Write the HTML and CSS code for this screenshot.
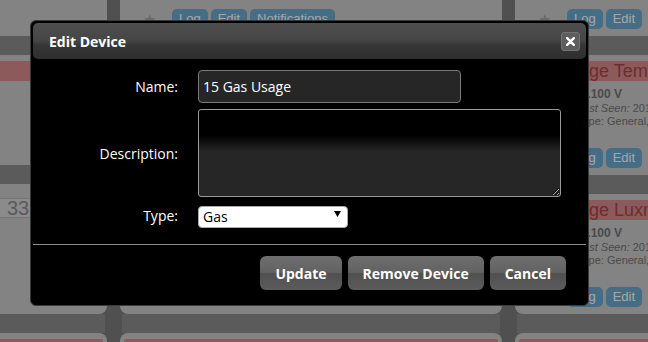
FILE: index.html
```html
<!DOCTYPE html>
<html lang="en">
<head>
  <meta charset="UTF-8" />
  <meta name="viewport" content="width=device-width, initial-scale=1.0" />
  <title>Dashboard - Edit Device</title>
  <link rel="stylesheet" href="styles.css">
</head>
<body>
  <div class="dashboard">
    <div class="column">
      <div class="item">
        <div class="item-options">
          <span class="star">★</span>
          <span class="btn-small">Log</span>
          <span class="btn-small">Edit</span>
        </div>
      </div>
      <div class="item item-short">
        <div class="item-name">Kitchen Setpoint</div>
      </div>
      <div class="item item-tall">
        <div class="item-value">334.50</div>
      </div>
      <div class="item">
        <div class="item-name">Outside Temp</div>
      </div>
    </div>

    <div class="column">
      <div class="item">
        <div class="item-options">
          <span class="star">★</span>
          <span class="btn-small">Log</span>
          <span class="btn-small">Edit</span>
          <span class="btn-small">Notifications</span>
        </div>
      </div>
      <div class="item"></div>
      <div class="item"></div>
      <div class="item">
        <div class="item-name">Gas Meter</div>
      </div>
    </div>

    <div class="column">
      <div class="item">
        <div class="item-options">
          <span class="star">★</span>
          <span class="btn-small">Log</span>
          <span class="btn-small">Edit</span>
        </div>
      </div>
      <div class="item">
        <div class="item-name">Garage Temperature</div>
        <div class="item-data">
          <div class="item-big">10.100 V</div>
          <div><i>Last Seen:</i> 2015-03-14 10:22:51</div>
          <div>Type: General, Voltage</div>
        </div>
        <div class="item-options">
          <span class="star">★</span>
          <span class="btn-small">Log</span>
          <span class="btn-small">Edit</span>
        </div>
      </div>
      <div class="item">
        <div class="item-name">Garage Luxmeter</div>
        <div class="item-data">
          <div class="item-big">10.100 V</div>
          <div><i>Last Seen:</i> 2015-03-14 10:22:51</div>
          <div>Type: General, Voltage</div>
        </div>
        <div class="item-options">
          <span class="star">★</span>
          <span class="btn-small">Log</span>
          <span class="btn-small">Edit</span>
        </div>
      </div>
      <div class="item">
        <div class="item-name">Garage Humidity</div>
      </div>
    </div>
  </div>

  <div class="overlay"></div>

  <div class="dialog">
    <div class="dialog-title">
      <span>Edit Device</span>
      <button class="dialog-close" type="button">
        <svg width="9" height="9" viewBox="0 0 9 9">
          <path d="M1.2 1.2 L7.8 7.8 M7.8 1.2 L1.2 7.8" stroke="#fff" stroke-width="2.4" stroke-linecap="round" fill="none"/>
        </svg>
      </button>
    </div>

    <form class="dialog-form">
      <label for="devname">Name:</label>
      <input id="devname" class="field-name" type="text" value="15 Gas Usage">

      <label for="devdesc">Description:</label>
      <textarea id="devdesc" class="field-desc"></textarea>

      <label for="devtype">Type:</label>
      <div class="select-wrap">
        <select id="devtype">
          <option>Gas</option>
        </select>
        <svg class="select-arrow" width="7" height="6" viewBox="0 0 7 6">
          <path d="M0 0 L7 0 L3.5 6 Z" fill="#000"/>
        </svg>
      </div>
    </form>

    <div class="dialog-buttons">
      <button type="button">Update</button>
      <button type="button">Remove Device</button>
      <button type="button">Cancel</button>
    </div>
  </div>
</body>
</html>
```

FILE: styles.css
```css
* {
  box-sizing: border-box;
}

body {
  margin: 0;
  height: 342px;
  overflow: hidden;
  background: #7b7b7b;
  font-family: 'Liberation Sans', Arial, sans-serif;
  position: relative;
}

/* dashboard behind the dialog */

.dashboard {
  display: flex;
  gap: 13px;
  margin-left: -275px;
  margin-top: -84px;
}

.column {
  flex: none;
  width: 382px;
  display: flex;
  flex-direction: column;
}

.item {
  position: relative;
  height: 120px;
  margin-bottom: 19px;
  padding: 6px 4px 7px;
  background: #c9c9c9;
  border-radius: 8px;
  display: flex;
  flex-direction: column;
}

.item::after {
  content: '';
  position: absolute;
  left: 2px;
  right: 2px;
  top: 100%;
  height: 19px;
  background: #8d8d8d;
}

.item-short {
  height: 110px;
}

.item-tall {
  height: 130px;
}

.item-name {
  height: 20px;
  padding-left: 30px;
  background: #d78a8a;
  color: #aa4646;
  font-size: 18px;
  line-height: 20px;
  border-radius: 2px;
  white-space: nowrap;
}

.item-value {
  margin: 8px 0 0 269px;
  width: 120px;
  height: 20px;
  padding-left: 8px;
  background: #d6d6d6;
  border: 1px solid #b4b4b4;
  color: #8b8b8b;
  font-size: 20px;
  line-height: 18px;
}

.item-data {
  padding: 6px 0 0 58px;
  color: #727272;
  font-size: 11px;
  line-height: 13px;
  white-space: nowrap;
}

.item-big {
  margin-left: -3px;
  font-size: 12px;
  font-weight: 700;
  line-height: 15px;
}

.item-options {
  margin-top: auto;
  display: flex;
  align-items: center;
  gap: 3px;
  padding-left: 19px;
}

.star {
  width: 15px;
  margin-right: 11px;
  color: #a3a3a3;
  font-size: 15px;
  line-height: 15px;
}

.btn-small {
  height: 20px;
  padding: 0 7px;
  background: #6aa8cc;
  border-radius: 5px;
  color: #fff;
  font-size: 13px;
  line-height: 20px;
}

.overlay {
  position: fixed;
  inset: 0;
  background: rgba(0, 0, 0, 0.35);
}

/* dialog */

.dialog {
  position: absolute;
  left: 30px;
  top: 20px;
  width: 559px;
  height: 286px;
  padding: 2px;
  background: #000;
  border: 1px solid #3a3a3a;
  border-radius: 6px;
  font-family: 'Open Sans', sans-serif;
  color: #fff;
}

.dialog-title {
  height: 36px;
  padding: 0 6px 0 16px;
  display: flex;
  align-items: center;
  justify-content: space-between;
  background: linear-gradient(to bottom, #4e4e4e 0%, #464646 48%, #363636 62%, #2e2e2e 100%);
  border-radius: 5px;
  font-size: 14px;
  font-weight: 700;
}

.dialog-close {
  width: 19px;
  height: 19px;
  padding: 0;
  display: flex;
  align-items: center;
  justify-content: center;
  background: #5e5e5e;
  border: 1px solid #727272;
  border-radius: 3px;
}

.dialog-form {
  margin: 11px 0 0;
  display: grid;
  grid-template-columns: 145px auto;
  grid-template-rows: 33px 88px 24px;
  column-gap: 20px;
  row-gap: 6px;
  align-items: center;
}

.dialog-form label {
  text-align: right;
  font-size: 14px;
}

.field-name,
.field-desc,
.dialog-form select {
  font-family: 'Open Sans', sans-serif;
  font-size: 14px;
  outline: none;
}

.field-name {
  width: 263px;
  height: 33px;
  padding: 0 4px;
  background: #262626;
  border: 1px solid #7a7a7a;
  border-radius: 4px;
  color: #fff;
}

.field-desc {
  width: 363px;
  height: 88px;
  margin: 0;
  background: linear-gradient(to bottom, #000 0%, #000 30%, #262626 48%, #262626 100%);
  border: 1px solid #9a9a9a;
  border-radius: 3px;
  color: #fff;
}

.select-wrap {
  position: relative;
  width: 150px;
  height: 22px;
  align-self: end;
}

.select-wrap select {
  appearance: none;
  -webkit-appearance: none;
  width: 100%;
  height: 100%;
  padding: 0 0 0 4px;
  background: #fff;
  border: 1px solid #aaa;
  border-radius: 4px;
  color: #000;
}

.select-arrow {
  position: absolute;
  right: 7px;
  top: 6px;
  pointer-events: none;
}

.dialog-buttons {
  margin-top: 17px;
  padding: 11px 20px 0 0;
  border-top: 1px solid #8a8a8a;
  display: flex;
  justify-content: flex-end;
  gap: 6px;
}

.dialog-buttons button {
  height: 34px;
  padding: 0 15px;
  background: linear-gradient(to bottom, #6e6e6e 0%, #626262 48%, #505050 52%, #5c5c5c 100%);
  border: none;
  border-radius: 6px;
  color: #fff;
  font-family: 'Open Sans', sans-serif;
  font-size: 14px;
  font-weight: 700;
}
```
